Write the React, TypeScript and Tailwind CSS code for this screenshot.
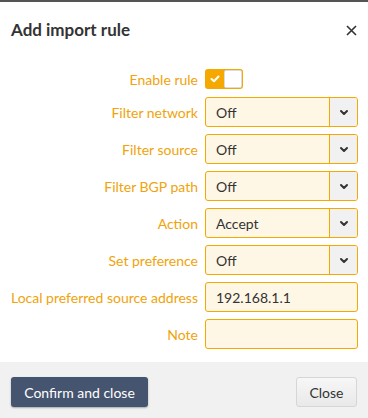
import React from "react";

const font = { fontFamily: "Lato, 'Open Sans', sans-serif" };

function Chevron() {
  return (
    <svg width="10" height="7" viewBox="0 0 10 7" aria-hidden>
      <path d="M2 2 L5 5 L8 2" fill="none" stroke="#333" strokeWidth="2" strokeLinecap="round" strokeLinejoin="round" />
    </svg>
  );
}

function Select({ value }: { value: string }) {
  return (
    <div className="flex h-[30px] w-[153px] overflow-hidden rounded-[3px] border border-[#f5a800] bg-[#fff7e6]">
      <div className="flex flex-1 items-center pl-[10px] text-[14px] text-[#333]">{value}</div>
      <div className="flex w-[28px] items-center justify-center border-l border-[#f5a800] bg-[#f1f1f1]">
        <Chevron />
      </div>
    </div>
  );
}

function Input({ value }: { value: string }) {
  return (
    <div className="flex h-[30px] w-[153px] items-center rounded-[3px] border border-[#f5a800] bg-[#fff7e6] pl-[10px] text-[14px] text-[#333]">
      {value}
    </div>
  );
}

function Row({ label, children }: { label: string; children: React.ReactNode }) {
  return (
    <div className="flex h-[30px] items-center">
      <div className="w-[198px] pr-0 text-right text-[14px] text-[#f0a30a]">{label}</div>
      <div className="ml-[7px]">{children}</div>
    </div>
  );
}

export default function App() {
  return (
    <div className="flex h-[418px] w-[368px] flex-col border-t-2 border-[#555] bg-white" style={font}>
      <div className="flex h-[56px] items-center justify-between pl-[11px] pr-[11px]">
        <div className="text-[17px] font-bold text-[#333]">Add import rule</div>
        <svg width="11" height="11" viewBox="0 0 11 11" aria-hidden>
          <path d="M1 1 L10 10 M10 1 L1 10" stroke="#333" strokeWidth="1.6" />
        </svg>
      </div>
      <div className="flex flex-1 flex-col pt-[11px]">
        <div className="mb-[8px] flex h-[20px] items-center">
          <div className="w-[198px] text-right text-[14px] text-[#f0a30a]">Enable rule</div>
          <div className="ml-[7px] flex h-[20px] w-[38px] items-center rounded-[3px] bg-[#f5a800] p-[1px]">
            <div className="flex w-[18px] items-center justify-center">
              <svg width="10" height="8" viewBox="0 0 10 8" aria-hidden>
                <path d="M1.5 4 L4 6.3 L8.5 1.5" fill="none" stroke="#fff" strokeWidth="2" strokeLinecap="round" strokeLinejoin="round" />
              </svg>
            </div>
            <div className="h-[18px] w-[18px] rounded-[2px] border border-[#ddd] bg-white" />
          </div>
        </div>
        <div className="flex flex-col gap-[7px]">
          <Row label="Filter network"><Select value="Off" /></Row>
          <Row label="Filter source"><Select value="Off" /></Row>
          <Row label="Filter BGP path"><Select value="Off" /></Row>
          <Row label="Action"><Select value="Accept" /></Row>
          <Row label="Set preference"><Select value="Off" /></Row>
          <Row label="Local preferred source address"><Input value="192.168.1.1" /></Row>
          <Row label="Note"><Input value="" /></Row>
        </div>
      </div>
      <div className="flex h-[56px] items-start justify-between bg-[#f1f1f1] px-[11px] pt-[15px]">
        <div className="flex h-[30px] w-[137px] items-center justify-center rounded-[3px] bg-[#45546f] text-[14px] text-white shadow-[0_1px_2px_rgba(0,0,0,0.3)]">
          Confirm and close
        </div>
        <div className="flex h-[30px] w-[61px] items-center justify-center rounded-[3px] border border-[#d6d6d6] bg-gradient-to-b from-[#f7f7f7] to-[#e9e9e9] text-[14px] text-[#333]">
          Close
        </div>
      </div>
    </div>
  );
}
